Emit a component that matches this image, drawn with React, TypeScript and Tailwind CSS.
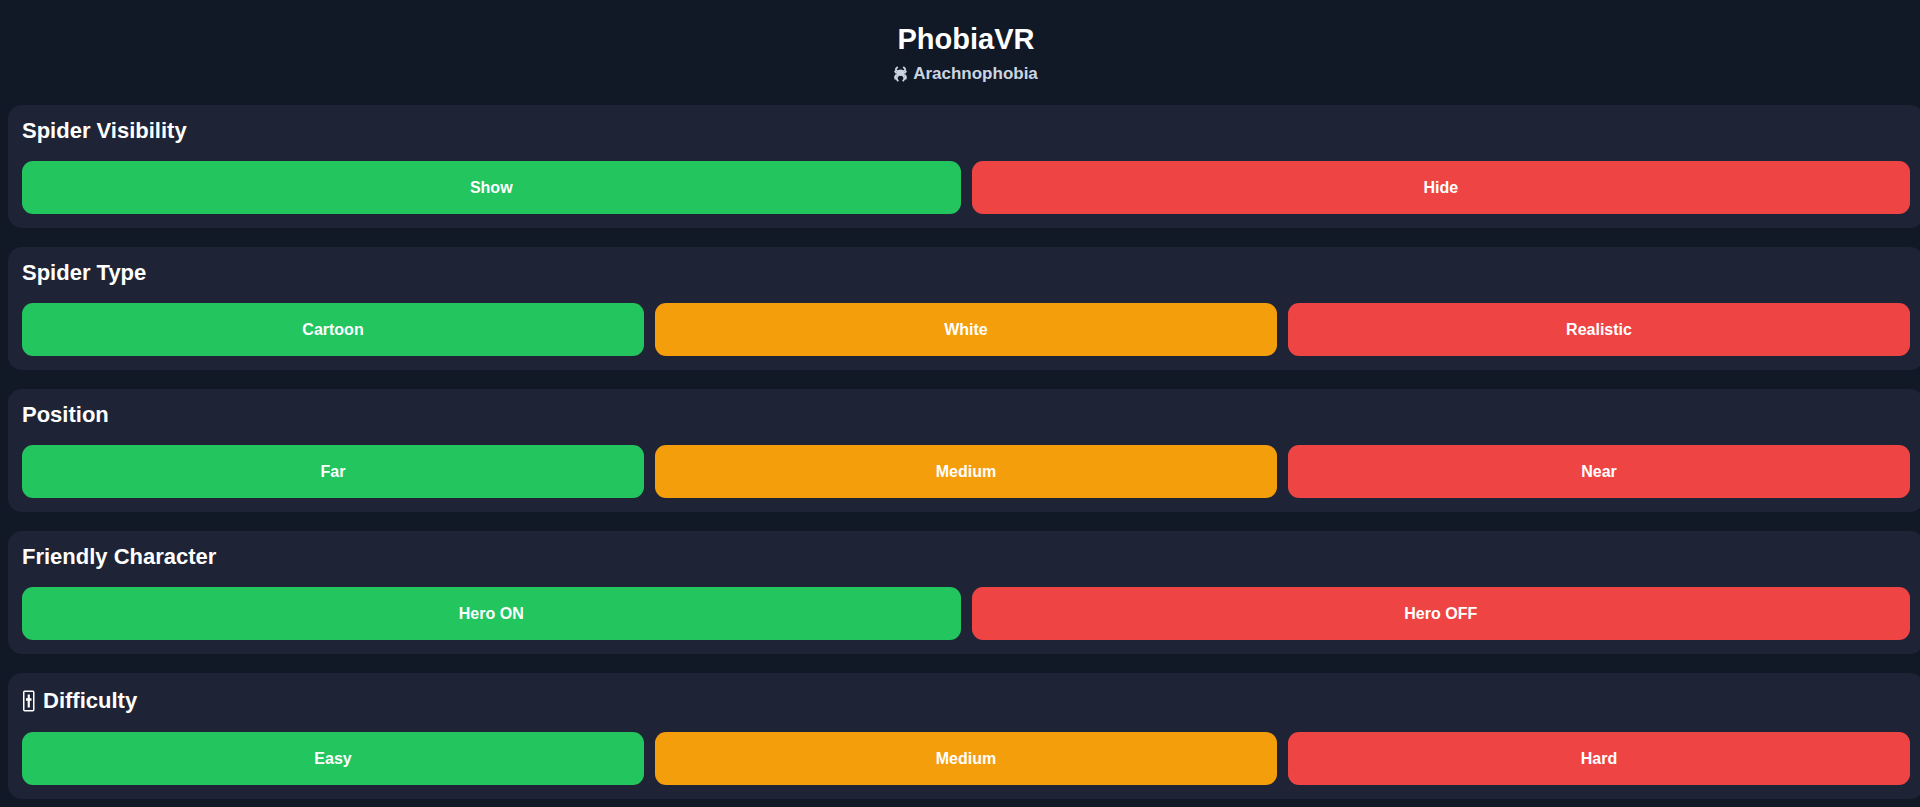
import React from 'react';

type Tone = 'good' | 'warn' | 'bad';

interface Option {
  label: string;
  tone: Tone;
}

interface Group {
  title: string;
  icon?: boolean;
  options: Option[];
}

const TONES: Record<Tone, string> = {
  good: 'bg-[#22c55e]',
  warn: 'bg-[#f59e0b]',
  bad: 'bg-[#ef4444]',
};

const GROUPS: Group[] = [
  { title: 'Spider Visibility', options: [{ label: 'Show', tone: 'good' }, { label: 'Hide', tone: 'bad' }] },
  { title: 'Spider Type', options: [{ label: 'Cartoon', tone: 'good' }, { label: 'White', tone: 'warn' }, { label: 'Realistic', tone: 'bad' }] },
  { title: 'Position', options: [{ label: 'Far', tone: 'good' }, { label: 'Medium', tone: 'warn' }, { label: 'Near', tone: 'bad' }] },
  { title: 'Friendly Character', options: [{ label: 'Hero ON', tone: 'good' }, { label: 'Hero OFF', tone: 'bad' }] },
  { title: 'Difficulty', icon: true, options: [{ label: 'Easy', tone: 'good' }, { label: 'Medium', tone: 'warn' }, { label: 'Hard', tone: 'bad' }] },
];

const SpiderIcon = () => (
  <svg viewBox="0 0 13 16" className="w-[13px] h-4" fill="none" stroke="currentColor" strokeWidth="1.8" strokeLinejoin="round" aria-hidden="true">
    <ellipse cx="6.5" cy="6.8" rx="3.6" ry="3.3" fill="currentColor" stroke="none" />
    <path d="M4.5 6 2 4.200 2 2.600 3.800 1M8.500 6l2.500-1.800V2.600L9.200 1" />
    <path d="M4.500 7.200 1.800 6.600.9 4.600M8.500 7.200l2.700-.6.9-2" />
    <path d="M4.500 8.500 1.800 9.400 1 11.200 1.600 13.500M8.500 8.500l2.700.9.8 1.800-.6 2.300" />
    <path d="M4.500 9 2.800 11.200 2.800 13.200 4.200 15.200M8.500 9l1.700 2.200v2l-1.400 2" />
  </svg>
);

const SliderIcon = () => (
  <svg viewBox="0 0 13 22" className="w-[13px] h-[22px]" fill="none" stroke="currentColor" aria-hidden="true">
    <rect x="1.75" y="1.25" width="10" height="19.5" rx="1" strokeWidth="1.5" />
    <path d="M6.750 4.500v13" strokeWidth="2.200" />
    <path d="M4 9.500h5.500" strokeWidth="2.500" />
  </svg>
);

const ControlGroup: React.FC<{ group: Group }> = ({ group }) => (
  <section className="rounded-[14px] bg-[#1e2435] px-[14px] pt-[13px] pb-[14px]">
    <h2 className={`flex items-center gap-2 text-[22px] font-bold ${group.icon ? 'mb-4 leading-[30px]' : 'mb-[18px] leading-[25px]'}`}>
      {group.icon && <SliderIcon />}
      {group.title}
    </h2>
    <div className="flex gap-[11px]">
      {group.options.map(option => (
        <button key={option.label} type="button" className={`flex-1 h-[53px] rounded-[11px] text-base font-bold text-white ${TONES[option.tone]}`}>
          {option.label}
        </button>
      ))}
    </div>
  </section>
);

export default function App() {
  return (
    <div className="min-h-screen overflow-hidden bg-[#111826] pb-2 font-['Liberation_Sans',Arial,sans-serif] text-white">
      <div className="ml-2 -mr-1">
        <header className="flex flex-col items-center pt-[21px] pb-5">
          <h1 className="text-[29px] leading-9 font-bold">PhobiaVR</h1>
          <p className="mt-[6px] flex items-center gap-[6px] text-[17px] leading-[22px] font-bold text-[#cbd5e1]">
            <SpiderIcon />
            Arachnophobia
          </p>
        </header>
        <main className="flex flex-col gap-[19px]">
          {GROUPS.map(group => (
            <ControlGroup key={group.title} group={group} />
          ))}
        </main>
      </div>
    </div>
  );
}
